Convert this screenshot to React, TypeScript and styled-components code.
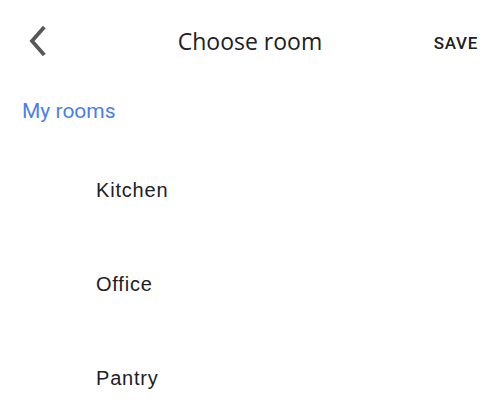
import React from 'react';
import styled, { createGlobalStyle } from 'styled-components';

const GlobalStyle = createGlobalStyle`
  html, body {
    margin: 0;
    padding: 0;
    background: #fff;
  }
  body {
    font-family: Roboto, 'Noto Sans', sans-serif;
    -webkit-font-smoothing: antialiased;
  }
`;

const Screen = styled.div`
  width: 500px;
  height: 413px;
  overflow: hidden;
  background: #fff;
`;

const Header = styled.header`
  height: 82px;
  display: grid;
  grid-template-columns: 80px 1fr 80px;
  align-items: center;
`;

const BackButton = styled.button`
  justify-self: start;
  margin-left: 24px;
  width: 26px;
  height: 30px;
  padding: 0;
  border: none;
  background: none;
  display: flex;
  align-items: center;
  justify-content: center;
  cursor: pointer;
`;

const Title = styled.h1`
  margin: 0;
  text-align: center;
  font-family: 'Open Sans', Roboto, sans-serif;
  font-weight: 400;
  font-size: 23px;
  line-height: 28px;
  color: #202124;
`;

const SaveButton = styled.button`
  justify-self: end;
  margin-right: 22px;
  margin-top: 4px;
  padding: 0;
  border: none;
  background: none;
  font-family: Roboto, sans-serif;
  font-weight: 500;
  font-size: 17px;
  letter-spacing: 0.7px;
  color: #202124;
  cursor: pointer;
`;

const SectionLabel = styled.div`
  padding: 17px 0 0 22px;
  font-size: 21px;
  line-height: 24px;
  color: #4a7fe8;
`;

const RoomList = styled.ul`
  list-style: none;
  margin: 20px 0 0;
  padding: 0;
`;

const RoomItem = styled.li`
  height: 94px;
  display: flex;
  align-items: center;
  padding-left: 96px;
  font-family: 'Liberation Sans', Arial, sans-serif;
  font-size: 20px;
  line-height: 24px;
  letter-spacing: 0.8px;
  color: #202124;
`;

const rooms = ['Kitchen', 'Office', 'Pantry'];

const ChevronLeft = () => (
  <svg width="20" height="30" viewBox="0 0 20 30" fill="none">
    <path d="M16 2.5L5 15l11 12.5" stroke="#55575b" strokeWidth="3.8" strokeLinecap="square" />
  </svg>
);

export default function App() {
  return (
    <Screen>
      <GlobalStyle />
      <Header>
        <BackButton aria-label="Back">
          <ChevronLeft />
        </BackButton>
        <Title>Choose room</Title>
        <SaveButton>SAVE</SaveButton>
      </Header>
      <SectionLabel>My rooms</SectionLabel>
      <RoomList>
        {rooms.map((room) => (
          <RoomItem key={room}>{room}</RoomItem>
        ))}
      </RoomList>
    </Screen>
  );
}
